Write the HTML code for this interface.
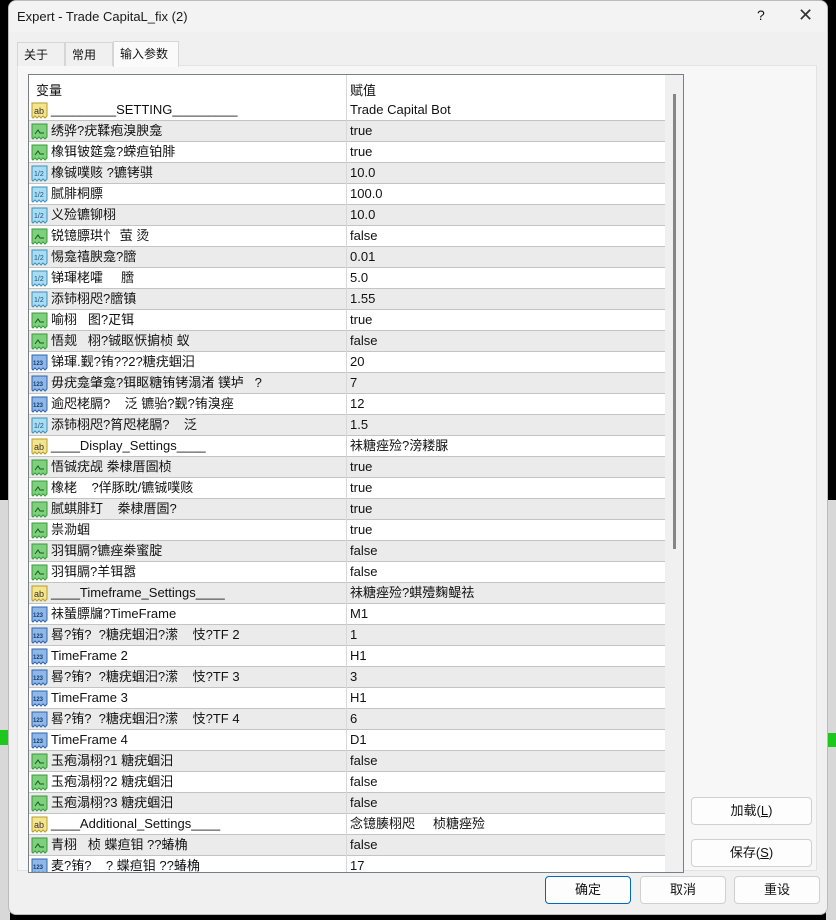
<!DOCTYPE html>
<html><head><meta charset="utf-8">
<style>
*{box-sizing:border-box;margin:0;padding:0}
body{width:836px;height:920px;overflow:hidden;background:#000;font-family:"Liberation Sans","Noto Sans CJK SC",sans-serif;font-size:13px;color:#111;position:relative}
.lstrip{position:absolute;left:0;top:0;width:10px;height:920px;background:linear-gradient(#000 0,#000 500px,#d8d8d8 500px,#d8d8d8 730px,#1dc81d 730px,#1dc81d 745px,#d8d8d8 745px)}
.rstrip{position:absolute;right:0;top:0;width:10px;height:920px;background:linear-gradient(#000 0,#000 500px,#d8d8d8 500px,#d8d8d8 733px,#1dc81d 733px,#1dc81d 747px,#d8d8d8 747px)}
.dlg{position:absolute;left:8px;top:0;width:820px;height:915px;background:#f0f0f0;border:1px solid #bbb;border-radius:8px;overflow:hidden}
.title{height:31px;background:#f3f3f3;font-size:13px;line-height:31px;padding-left:8px;color:#1a1a1a}
.q{position:absolute;left:748px;top:6px;font-size:14px}
.x{position:absolute;left:789px;top:4px;font-size:18px;font-weight:300;color:#333}
.tabs{position:absolute;left:8px;top:41px;height:24px}
.tab{position:absolute;top:0;height:24px;border:1px solid #d6d6d6;border-bottom:none;background:#f0f0f0;font-size:12px;line-height:24px;padding-left:6px}
.tab.a{background:#fafafa;top:-1px;height:26px}
.panel{position:absolute;left:8px;top:64px;width:800px;height:806px;background:#f7f7f8;border:1px solid #e3e3e3}
.tbl{position:absolute;left:19px;top:73px;width:656px;height:799px;background:#fff;border:1px solid #7a7f86;overflow:hidden}
.hdr{position:absolute;left:0;top:0;width:636px;height:25px;background:#fff}
.hdr span{position:absolute;top:5px;font-size:13px}
.row{position:absolute;left:0;width:636px;height:21px;border-bottom:1px solid #c4c4c4;font-size:13px;line-height:20px}
.row.g{background:#ebebeb}
.row .n{position:absolute;left:22px;top:0;white-space:pre}
.row .v{position:absolute;left:321px;top:0;white-space:pre}
.row svg{position:absolute;left:2px;top:2px}
.sep{position:absolute;left:317px;top:0;width:1px;height:799px;background:#d8d8d8}
.sb{position:absolute;left:636px;top:0;width:19px;height:799px;background:#f0f0f0}
.thumb{position:absolute;left:8px;top:19px;width:3px;height:455px;background:#858585}
.btn{position:absolute;height:28px;background:#fdfdfd;border:1px solid #d0d0d0;border-radius:4px;text-align:center;line-height:26px;font-size:13px}
</style></head><body>
<div class="lstrip"></div><div class="rstrip"></div>
<div class="dlg">
<div class="title">Expert - Trade CapitaL_fix (2)</div>
<div class="q">?</div><div class="x">✕</div>
<div class="panel"></div>
<div class="tabs">
<div class="tab" style="left:0;width:48px">关于</div>
<div class="tab" style="left:48px;width:48px">常用</div>
<div class="tab a" style="left:96px;width:66px">输入参数</div>
</div>
<div class="tbl" id="t">
<div class="hdr"><span style="left:7px">变量</span><span style="left:321px">赋值</span></div>
<div class="sep"></div>
<div class="sb"><div class="thumb"></div></div>
</div>
<div class="btn" style="left:682px;top:796px;width:121px">加载(<u>L</u>)</div>
<div class="btn" style="left:682px;top:838px;width:121px">保存(<u>S</u>)</div>
<div class="btn" style="left:536px;top:875px;width:86px;border:1px solid #0067c0">确定</div>
<div class="btn" style="left:631px;top:875px;width:86px">取消</div>
<div class="btn" style="left:725px;top:875px;width:86px">重设</div>
</div>
<script>
var ic={
ab:'<svg width="17" height="17"><path d="M1 1h15v13l-2 2-2-2-2 2-2-2-2 2-2-2-2 2-1-1z" fill="#f4e48c" stroke="#b59d2c"/><text x="3" y="12" font-size="9" font-family="Liberation Sans" fill="#333">ab</text></svg>',
b:'<svg width="17" height="17"><path d="M1 1h15v13l-2 2-2-2-2 2-2-2-2 2-2-2-2 2-1-1z" fill="#7ed07e" stroke="#3a9a3a"/><path d="M4 11l3-4 2 3h4" stroke="#135a13" fill="none"/></svg>',
h:'<svg width="17" height="17"><path d="M1 1h15v13l-2 2-2-2-2 2-2-2-2 2-2-2-2 2-1-1z" fill="#a8dcf2" stroke="#3f8fb8"/><text x="3" y="11" font-size="7" font-family="Liberation Sans" fill="#1b4f7a">1/2</text></svg>',
n:'<svg width="17" height="17"><path d="M1 1h15v13l-2 2-2-2-2 2-2-2-2 2-2-2-2 2-1-1z" fill="#8fb8e8" stroke="#2f64a8"/><text x="2" y="11" font-size="6" font-weight="bold" font-family="Liberation Sans" fill="#183b70">123</text></svg>'};
var R=[
['ab','_________SETTING_________','Trade Capital Bot'],
['b','绣骅?疣鞣疱溴腴龛','true'],
['b','橡铒铍筵龛?蝾疸铂腓','true'],
['h','橡铖噗赅 ?镳铐骐','10.0'],
['h','腻腓桐膘','100.0'],
['h','义殓镳铆栩','10.0'],
['b','锐镱膘珙忄 萤 烫','false'],
['h','惕龛禧腴龛?膪','0.01'],
['h','锑琿栳嚯     膪','5.0'],
['h','添铈栩咫?膪镇','1.55'],
['b','喻栩   图?疋铒','true'],
['b','悟觌   栩?铖眍恹掮桢 蚁','false'],
['n','锑琿.觐?铕??2?糖疣蝈汨','20'],
['n','毋疣龛肇龛?铒眍糖铕铐溻渚 镤垆   ?','7'],
['n','逾咫栳膈?    泛 镳骀?觐?铕溴痤','12'],
['h','添铈栩咫?筲咫栳膈?    泛','1.5'],
['ab','____Display_Settings____','祙糖痤殓?滂耧脲'],
['b','悟铖疣觇 桊棣厝圄桢','true'],
['b','橡栳    ?佯豚眈/镳铖噗赅','true'],
['b','腻蜞腓玎    桊棣厝圄?','true'],
['b','祟泐蝈','true'],
['b','羽铒膈?镳痤桊蜜腚','false'],
['b','羽铒膈?羊铒嚣','false'],
['ab','____Timeframe_Settings____','祙糖痤殓?蜞殪麴鳀祛'],
['n','祙蜑膘牖?TimeFrame','M1'],
['n','晷?铕?  ?糖疣蝈汨?潆    忮?TF 2','1'],
['n','TimeFrame 2','H1'],
['n','晷?铕?  ?糖疣蝈汨?潆    忮?TF 3','3'],
['n','TimeFrame 3','H1'],
['n','晷?铕?  ?糖疣蝈汨?潆    忮?TF 4','6'],
['n','TimeFrame 4','D1'],
['b','玉疱溻栩?1 糖疣蝈汨','false'],
['b','玉疱溻栩?2 糖疣蝈汨','false'],
['b','玉疱溻栩?3 糖疣蝈汨','false'],
['ab','____Additional_Settings____','念镱腠栩咫     桢糖痤殓'],
['b','青栩   桢 蝶疸钼 ??蝽桷','false'],
['n','麦?铕?    ? 蝶疸钼 ??蝽桷','17']];
var h='';
R.forEach(function(r,i){h+='<div class="row'+(i%2?' g':'')+'" style="top:'+(25+21*i)+'px">'+ic[r[0]]+'<span class="n">'+r[1]+'</span><span class="v">'+r[2]+'</span></div>';});
document.getElementById('t').insertAdjacentHTML('afterbegin',h);
</script>
</body></html>
